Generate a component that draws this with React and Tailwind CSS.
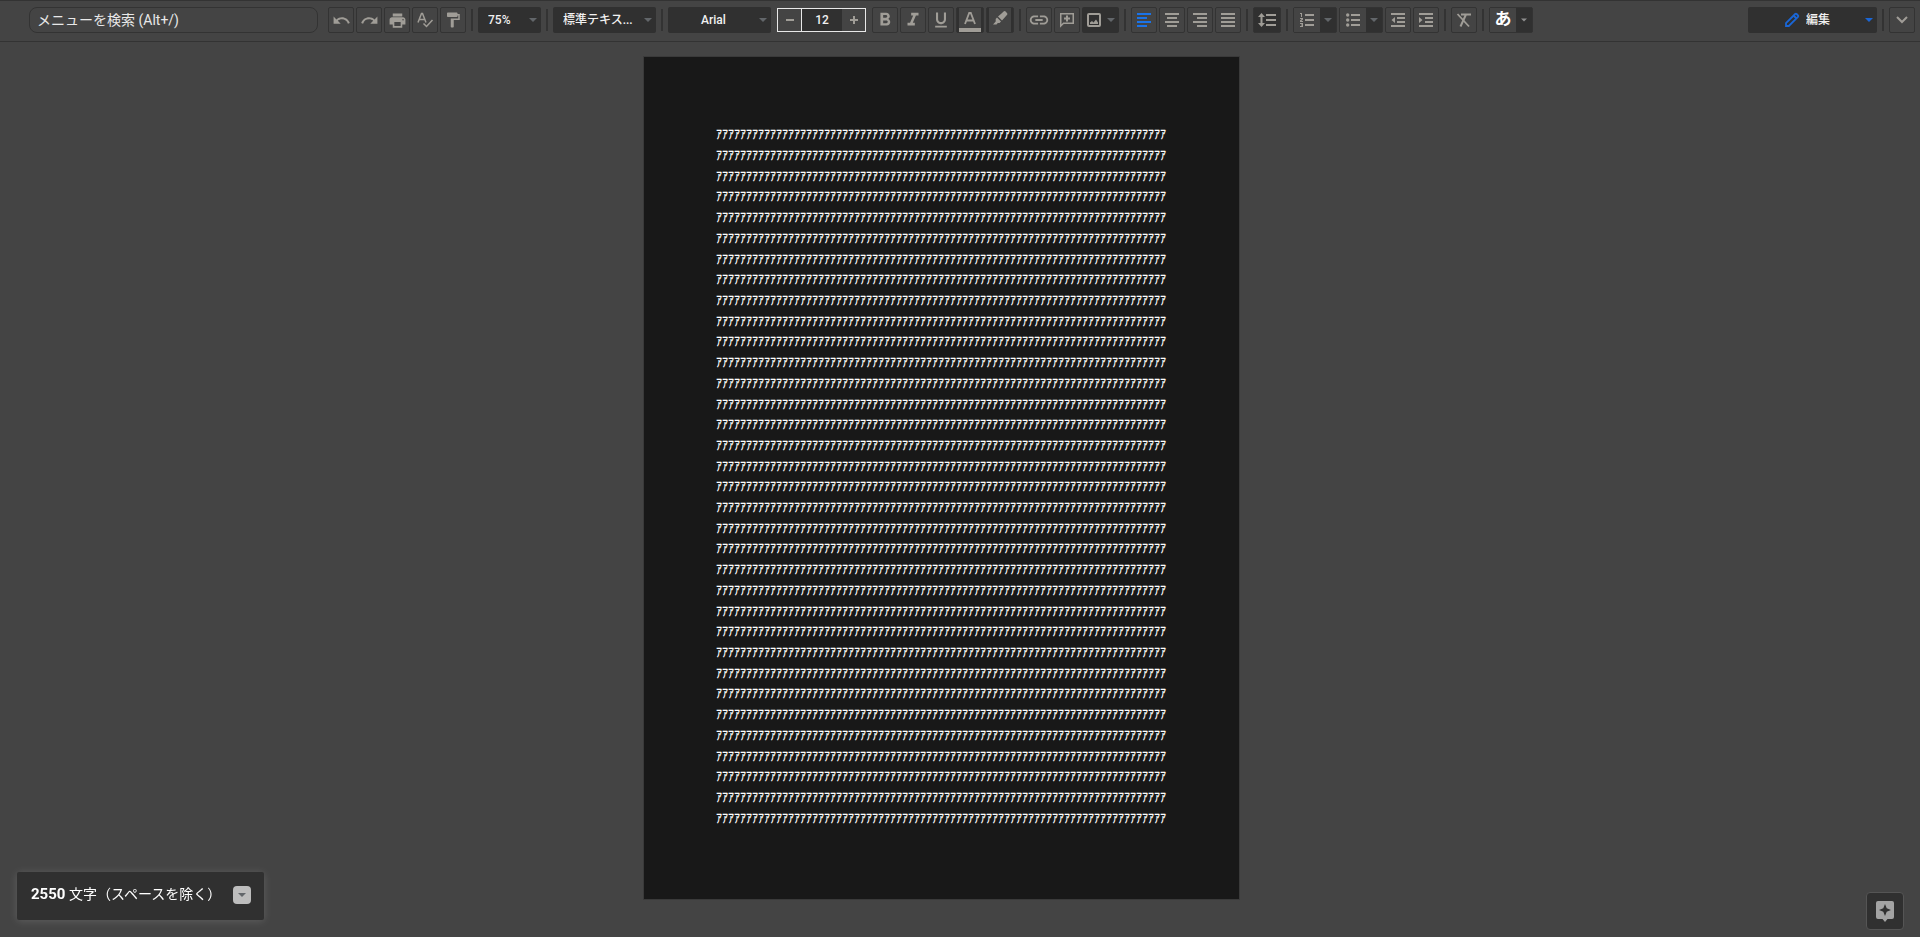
import React, { useState } from 'react';
import {
  MdUndo,
  MdRedo,
  MdPrint,
  MdFormatPaint,
  MdFormatBold,
  MdFormatItalic,
  MdFormatUnderlined,
  MdLink,
} from 'react-icons/md';

const LINE_COUNT = 34;
const CHARS_PER_LINE = 75;
const lines = Array.from({ length: LINE_COUNT }, () => 'ｱ'.repeat(CHARS_PER_LINE));

const Caret = ({ className = 'text-[#62666a]' }) => (
  <svg width="8" height="4" viewBox="0 0 8 4" className={`shrink-0 ${className}`} aria-hidden="true">
    <path d="M0 0h8L4 4z" fill="currentColor" />
  </svg>
);

const Separator = () => <div className="mx-[3px] h-[22px] w-0.5 shrink-0 bg-[#333]" />;

const ToolButton = ({ label, dark, active, children, ...rest }) => (
  <button
    type="button"
    aria-label={label}
    className={`flex h-[26px] shrink-0 items-center justify-center rounded-xs border border-[#333] ${
      dark ? 'w-7 bg-[#303030]' : 'w-[26px]'
    } ${active ? 'text-[#1a73e8]' : 'text-[#a09d97]'}`}
    {...rest}
  >
    {children}
  </button>
);

// Icon on the left, menu arrow on a darker strip on the right
const SplitButton = ({ label, children, caretClass }) => (
  <div className="flex h-[26px] shrink-0 rounded-xs border border-[#333] bg-[#303030] text-[#a09d97]">
    <button type="button" aria-label={label} className="flex w-[26px] items-center justify-center bg-[#444]">
      {children}
    </button>
    <button type="button" aria-label={`${label}メニュー`} className="flex w-4 items-center justify-center">
      <Caret className={caretClass} />
    </button>
  </div>
);

const ToolSelect = ({ label, options, className, caretClass }) => (
  <div className="relative flex shrink-0 items-center">
    <select
      aria-label={label}
      className={`h-[26px] appearance-none rounded-xs bg-[#303030] text-xs font-medium text-[#f1f1f1] outline-none ${className}`}
    >
      {options.map((option) => (
        <option key={option}>{option}</option>
      ))}
    </select>
    <span className="pointer-events-none absolute right-1">
      <Caret className={caretClass} />
    </span>
  </div>
);

// 14px glyphs made of 2px bars
const BarsIcon = ({ d, width = 14 }) => (
  <svg width={width} height="14" viewBox={`0 0 ${width} 14`} aria-hidden="true">
    <path d={d} fill="currentColor" />
  </svg>
);

const LineSpacingIcon = () => (
  <BarsIcon width={18} d="M3.500 0 7 4H4.500v6H7l-3.500 4L0 10h2.500V4H0zM8 1h10v2H8zM8 6h10v2H8zM8 11h10v2H8z" />
);

const NumberedIcon = () => (
  <BarsIcon d="M0 0h2v4H1V1H0zM0 5h3v1.500L1.300 8H3v1H0V7.600L1.700 6H0zM0 10h3v4H0v-1h2v-.600H1v-.800h1V11H0zM5 1h9v2H5zM5 6h9v2H5zM5 11h9v2H5z" />
);

const BulletedIcon = () => (
  <svg width="14" height="14" viewBox="0 0 14 14" fill="currentColor" aria-hidden="true">
    <circle cx="1.700" cy="2" r="1.700" />
    <circle cx="1.700" cy="7" r="1.700" />
    <circle cx="1.700" cy="12" r="1.700" />
    <path d="M5 1h9v2H5zM5 6h9v2H5zM5 11h9v2H5z" />
  </svg>
);

const SpellcheckIcon = () => (
  <svg width="18" height="18" viewBox="0 0 18 18" fill="none" stroke="currentColor" aria-hidden="true">
    <path d="M2 11.500 5.500 2.500h1L10 11.500M3.500 8.500h5" strokeWidth="1.500" />
    <path d="M7.500 12.500 10.500 15.500 16.500 9" strokeWidth="1.500" />
  </svg>
);

const HighlightIcon = () => (
  <svg width="16" height="16" viewBox="0 0 16 16" fill="currentColor" aria-hidden="true">
    <path d="M9.500 2.500 11.600.600a1.400 1.400 0 0 1 2 0l1.300 1.400a1.400 1.400 0 0 1 0 2L10 9.500 6 5.500z" />
    <path d="M5 6.500 9 10.500 7.500 12H5.800L4.500 13.500H1l2.700-3V8z" />
  </svg>
);

const CommentIcon = () => (
  <svg width="18" height="18" viewBox="0 0 18 18" fill="none" stroke="currentColor" aria-hidden="true">
    <path d="M2.750 15V2.750h12.500v9.500H5.500z" strokeWidth="1.500" />
    <path d="M9 4.500v6M6 7.500h6" strokeWidth="2" />
  </svg>
);

const ImageIcon = () => (
  <svg width="16" height="16" viewBox="0 0 16 16" aria-hidden="true">
    <rect x="2" y="2" width="12" height="12" rx="1" fill="none" stroke="currentColor" strokeWidth="2" />
    <path d="M4 12v-1.500L6 9l1.500 1.500L10 7.500l2 3V12z" fill="currentColor" />
  </svg>
);

const TextColorIcon = () => (
  <svg width="22" height="24" viewBox="0 0 22 24" aria-hidden="true">
    <path d="M6 16 10.200 5h1.600L16 16M7.500 12.500h7" fill="none" stroke="currentColor" strokeWidth="1.800" />
    <path d="M0 20h22v4H0z" fill="currentColor" />
  </svg>
);

const ClearFormatIcon = () => (
  <svg width="18" height="18" viewBox="0 0 18 18" fill="none" stroke="currentColor" aria-hidden="true">
    <path d="M6 3.500h10M11 3.500 5.500 15.500" strokeWidth="2" />
    <path d="M2.500 3 14 15.500" strokeWidth="1.800" />
  </svg>
);

const PencilIcon = () => (
  <svg width="16" height="16" viewBox="0 0 16 16" fill="none" stroke="currentColor" aria-hidden="true">
    <path d="M2 14v-2.800L11.200 2a1 1 0 0 1 1.400 0l1.400 1.400a1 1 0 0 1 0 1.400L4.800 14z" strokeWidth="1.800" />
    <path d="m9.500 3.500 3 3" strokeWidth="2" />
  </svg>
);

const ExploreIcon = () => (
  <svg width="18" height="21" viewBox="0 0 18 21" aria-hidden="true">
    <path
      d="M2 0h14a2 2 0 0 1 2 2v14a2 2 0 0 1-2 2h-4.500L9 21l-2.500-3H2a2 2 0 0 1-2-2V2a2 2 0 0 1 2-2z"
      fill="#a3a3a3"
    />
    <path d="M9 3 10.700 7.300 15 9l-4.300 1.700L9 15l-1.700-4.300L3 9l4.300-1.700z" fill="#303030" />
  </svg>
);

const alignments = [
  { id: 'left', label: '左揃え', d: 'M0 0h14v2H0zM0 4h10v2H0zM0 8h14v2H0zM0 12h10v2H0z' },
  { id: 'center', label: '中央揃え', d: 'M0 0h14v2H0zM2 4h10v2H2zM0 8h14v2H0zM2 12h10v2H2z' },
  { id: 'right', label: '右揃え', d: 'M0 0h14v2H0zM4 4h10v2H4zM0 8h14v2H0zM4 12h10v2H4z' },
  { id: 'justify', label: '両端揃え', d: 'M0 0h14v2H0zM0 4h14v2H0zM0 8h14v2H0zM0 12h14v2H0z' },
];

const Toolbar = () => {
  const [align, setAlign] = useState('left');
  const [fontSize, setFontSize] = useState(12);

  return (
    <header className="flex h-[42px] items-center gap-0.5 border-y border-[#333] pr-[5px] pb-0.5 pl-[29px]">
      <input
        type="text"
        aria-label="メニューを検索"
        placeholder="メニューを検索 (Alt+/)"
        className="mr-2 h-[26px] w-[289px] rounded-lg border border-[#333] px-[7px] text-sm text-[#e8e8e8] outline-none placeholder:text-[#e8e8e8]"
      />

      <ToolButton label="元に戻す"><MdUndo size={19} /></ToolButton>
      <ToolButton label="やり直し"><MdRedo size={19} /></ToolButton>
      <ToolButton label="印刷"><MdPrint size={19} /></ToolButton>
      <ToolButton label="スペルチェック"><SpellcheckIcon /></ToolButton>
      <ToolButton label="書式を貼り付け"><MdFormatPaint size={18} /></ToolButton>
      <Separator />

      <ToolSelect label="ズーム" options={['75%', '100%', '125%']} className="w-[63px] pl-2.5" />
      <Separator />
      <ToolSelect label="スタイル" options={['標準テキス...', 'タイトル', '見出し 1']} className="w-[103px] pl-2.5" />
      <Separator />
      <ToolSelect label="フォント" options={['Arial', 'Roboto']} className="w-[103px] pr-3 text-center" />

      {/* Font size */}
      <div className="mx-1 flex h-6 w-[89px] shrink-0 border border-[#e8e8e8] text-[#a09d97]">
        <button
          type="button"
          aria-label="フォントサイズを縮小"
          onClick={() => setFontSize(fontSize - 1)}
          className="flex w-6 items-center justify-center border-r border-[#e8e8e8]"
        >
          <span className="h-0.5 w-2 bg-current" />
        </button>
        <input
          type="text"
          aria-label="フォントサイズ"
          value={fontSize}
          onChange={(e) => setFontSize(Number(e.target.value) || 0)}
          className="w-10 bg-[#303030] text-center text-xs font-medium text-[#f1f1f1] outline-none"
        />
        <button
          type="button"
          aria-label="フォントサイズを拡大"
          onClick={() => setFontSize(fontSize + 1)}
          className="flex flex-1 items-center justify-center"
        >
          <svg width="8" height="8" viewBox="0 0 8 8" aria-hidden="true">
            <path d="M3 0h2v3h3v2H5v3H3V5H0V3h3z" fill="currentColor" />
          </svg>
        </button>
      </div>

      <ToolButton label="太字"><MdFormatBold size={22} /></ToolButton>
      <ToolButton label="斜体"><MdFormatItalic size={22} /></ToolButton>
      <ToolButton label="下線"><MdFormatUnderlined size={20} /></ToolButton>
      <ToolButton label="テキストの色" dark>
        <span className="bg-[#444]"><TextColorIcon /></span>
      </ToolButton>
      <ToolButton label="ハイライトの色" dark>
        <span className="flex h-6 w-[22px] items-start justify-center bg-[#444] pt-[3px]"><HighlightIcon /></span>
      </ToolButton>
      <Separator />

      <ToolButton label="リンクを挿入"><MdLink size={22} /></ToolButton>
      <ToolButton label="コメントを追加"><CommentIcon /></ToolButton>
      <button
        type="button"
        aria-label="画像を挿入"
        className="flex h-[26px] w-[37px] shrink-0 items-center justify-between rounded-xs bg-[#303030] pr-1 pl-1 text-[#a09d97]"
      >
        <ImageIcon />
        <Caret />
      </button>
      <Separator />

      {alignments.map(({ id, label, d }) => (
        <ToolButton key={id} label={label} active={align === id} onClick={() => setAlign(id)}>
          <BarsIcon d={d} />
        </ToolButton>
      ))}
      <Separator />

      <ToolButton label="行間隔" dark><LineSpacingIcon /></ToolButton>
      <Separator />

      <SplitButton label="番号付きリスト"><NumberedIcon /></SplitButton>
      <SplitButton label="箇条書き"><BulletedIcon /></SplitButton>
      <ToolButton label="インデント減">
        <BarsIcon d="M0 0h14v2H0zM6 4h8v2H6zM6 8h8v2H6zM0 12h14v2H0zM4 4v6L0.500 7z" />
      </ToolButton>
      <ToolButton label="インデント増">
        <BarsIcon d="M0 0h14v2H0zM6 4h8v2H6zM6 8h8v2H6zM0 12h14v2H0zM0 4v6L3.500 7z" />
      </ToolButton>
      <Separator />
      <ToolButton label="書式をクリア"><ClearFormatIcon /></ToolButton>
      <Separator />
      <SplitButton label="入力ツール" caretClass="w-1.5 text-[#8e8e8e]">
        <span className="text-[17px] font-bold text-white">あ</span>
      </SplitButton>

      {/* Mode switch */}
      <div className="ml-auto flex items-center gap-0.5">
        <div className="relative flex items-center">
          <ToolSelect
            label="モード"
            options={['編集', '提案', '閲覧']}
            className="w-[129px] rounded-sm pl-[58px]"
            caretClass="text-[#1a66d6]"
          />
          <span className="pointer-events-none absolute left-9 text-[#1a66d6]"><PencilIcon /></span>
        </div>
        <Separator />
        <ToolButton label="メニューを表示">
          <svg width="12" height="8" viewBox="0 0 12 8" fill="none" aria-hidden="true">
            <path d="m1 1 5 5 5-5" stroke="currentColor" strokeWidth="2" />
          </svg>
        </ToolButton>
      </div>
    </header>
  );
};

const App = () => (
  <div className="relative min-h-screen bg-[#444] font-['Roboto','Noto_Sans_CJK_JP',sans-serif]">
    <Toolbar />

    {/* Document */}
    <main className="flex justify-center pt-[15px] pr-[37px]">
      <article className="grid aspect-[595/842] w-[595px] auto-rows-fr items-center bg-[#181818] px-[72px] pt-[67px] pb-[71px] font-['Noto_Sans_CJK_JP',sans-serif] text-xs leading-5 font-medium whitespace-nowrap text-white outline outline-[#3a3a3a]">
        {lines.map((line, i) => (
          <p key={i}>{line}</p>
        ))}
      </article>
    </main>

    {/* Word count */}
    <div className="fixed bottom-[17px] left-[17px] flex h-12 w-[247px] items-center justify-between rounded-xs bg-[#303030] pr-[13px] pb-0.5 pl-3.5 text-sm text-white shadow-[0_1px_8px_rgba(255,255,255,0.15)]">
      <p><span className="text-[15px] font-bold">2550</span> 文字（スペースを除く）</p>
      <button
        type="button"
        aria-label="文字カウントのオプション"
        className="-ml-4 flex size-[18px] items-center justify-center rounded-sm bg-[#bdbdbd]"
      >
        <Caret />
      </button>
    </div>

    <button
      type="button"
      aria-label="データ探索"
      className="fixed right-4 bottom-[7px] flex size-[38px] items-center justify-center rounded-sm border border-[#555] bg-[#303030]"
    >
      <ExploreIcon />
    </button>
  </div>
);

export default App;
